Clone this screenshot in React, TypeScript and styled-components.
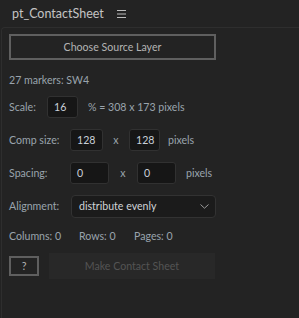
import * as React from "react";
import styled, { createGlobalStyle } from "styled-components";

const GlobalStyle = createGlobalStyle`
  html, body {
    margin: 0;
    padding: 0;
    background: #232323;
  }
  body {
    font-family: Lato, "Open Sans", sans-serif;
    font-size: 10.6px;
  }
`;

const Window = styled.div`
  width: 299px;
  height: 318px;
  display: flex;
  flex-direction: column;
  background: #232323;
  overflow: hidden;
`;

const TabBar = styled.div`
  height: 27px;
  display: flex;
  align-items: center;
  padding-left: 12px;
  gap: 13px;
`;

const TabTitle = styled.span`
  color: #c4c4c4;
  font-size: 12.5px;
`;

const Panel = styled.div`
  flex: 1;
  border-top: 1px solid #2e2e2e;
  border-left: 1px solid #2e2e2e;
  border-top-left-radius: 4px;
  margin-left: 1px;
  padding: 6px 0 0 7px;
  display: flex;
  flex-direction: column;
`;

const OutlineButton = styled.button<{ $w: number; $h: number }>`
  width: ${p => p.$w}px;
  height: ${p => p.$h}px;
  box-sizing: border-box;
  background: transparent;
  border: 2px solid #5f5f5f;
  color: #b4b4b4;
  font-family: inherit;
  font-size: 10.6px;
  padding: 0;
`;

const FlatButton = styled.button`
  width: 166px;
  height: 26px;
  box-sizing: border-box;
  background: #282828;
  border: none;
  color: #545454;
  font-family: inherit;
  font-size: 10.6px;
  padding: 0;
`;

const Info = styled.div<{ $top: number }>`
  margin-top: ${p => p.$top}px;
  height: 16px;
  line-height: 16px;
  color: #9aa3ad;
  display: flex;
`;

const Row = styled.div<{ $top: number }>`
  margin-top: ${p => p.$top}px;
  height: 22px;
  display: flex;
  align-items: center;
  color: #9aa3ad;
`;

const Label = styled.span<{ $w: number }>`
  width: ${p => p.$w}px;
  flex: none;
`;

const Field = styled.div<{ $w: number }>`
  width: ${p => p.$w}px;
  height: 22px;
  box-sizing: border-box;
  background: #161616;
  border: 1px solid #313131;
  border-radius: 3px;
  color: #c9d0d8;
  padding-left: 6px;
  line-height: 20px;
  flex: none;
`;

const Times = styled.span<{ $w: number }>`
  width: ${p => p.$w}px;
  text-align: center;
  flex: none;
`;

const Unit = styled.span<{ $left: number }>`
  margin-left: ${p => p.$left}px;
`;

const Select = styled.div`
  width: 145px;
  height: 23px;
  box-sizing: border-box;
  background: #1b1b1b;
  border: 1px solid #323232;
  border-radius: 4px;
  display: flex;
  align-items: center;
  justify-content: space-between;
  padding: 0 6px 0 7px;
  color: #d0d4d8;
`;

const Count = styled.span<{ $w: number }>`
  width: ${p => p.$w}px;
  flex: none;
`;

const Footer = styled.div`
  margin-top: 9px;
  display: flex;
  align-items: center;
  gap: 10px;
`;

const Burger = () => (
  <svg width="9" height="8" viewBox="0 0 9 8">
    <path d="M0 0.5h9M0 4h9M0 7.5h9" stroke="#bdbdbd" strokeWidth="1" />
  </svg>
);

const Chevron = () => (
  <svg width="9" height="5" viewBox="0 0 9 5">
    <path d="M0.5 0.5L4.5 4.2L8.5 0.5" stroke="#9a9a9a" strokeWidth="1" fill="none" />
  </svg>
);

export default function App() {
  return (
    <Window>
      <GlobalStyle />
      <TabBar>
        <TabTitle>pt_ContactSheet</TabTitle>
        <Burger />
      </TabBar>
      <Panel>
        <OutlineButton $w={207} $h={26}>Choose Source Layer</OutlineButton>
        <Info $top={12}>27 markers: SW4</Info>
        <Row $top={8}>
          <Label $w={38}>Scale:</Label>
          <Field $w={31}>16</Field>
          <Unit $left={10}>% = 308 x 173 pixels</Unit>
        </Row>
        <Row $top={11}>
          <Label $w={61}>Comp size:</Label>
          <Field $w={33}>128</Field>
          <Times $w={26}>x</Times>
          <Field $w={31}>128</Field>
          <Unit $left={8}>pixels</Unit>
        </Row>
        <Row $top={11}>
          <Label $w={61}>Spacing:</Label>
          <Field $w={39}>0</Field>
          <Times $w={28}>x</Times>
          <Field $w={39}>0</Field>
          <Unit $left={10}>pixels</Unit>
        </Row>
        <Row $top={11}>
          <Label $w={62}>Alignment:</Label>
          <Select>
            <span>distribute evenly</span>
            <Chevron />
          </Select>
        </Row>
        <Info $top={11}>
          <Count $w={70}>Columns: 0</Count>
          <Count $w={55}>Rows: 0</Count>
          <Count $w={60}>Pages: 0</Count>
        </Info>
        <Footer>
          <OutlineButton $w={30} $h={20}>?</OutlineButton>
          <FlatButton disabled>Make Contact Sheet</FlatButton>
        </Footer>
      </Panel>
    </Window>
  );
}
